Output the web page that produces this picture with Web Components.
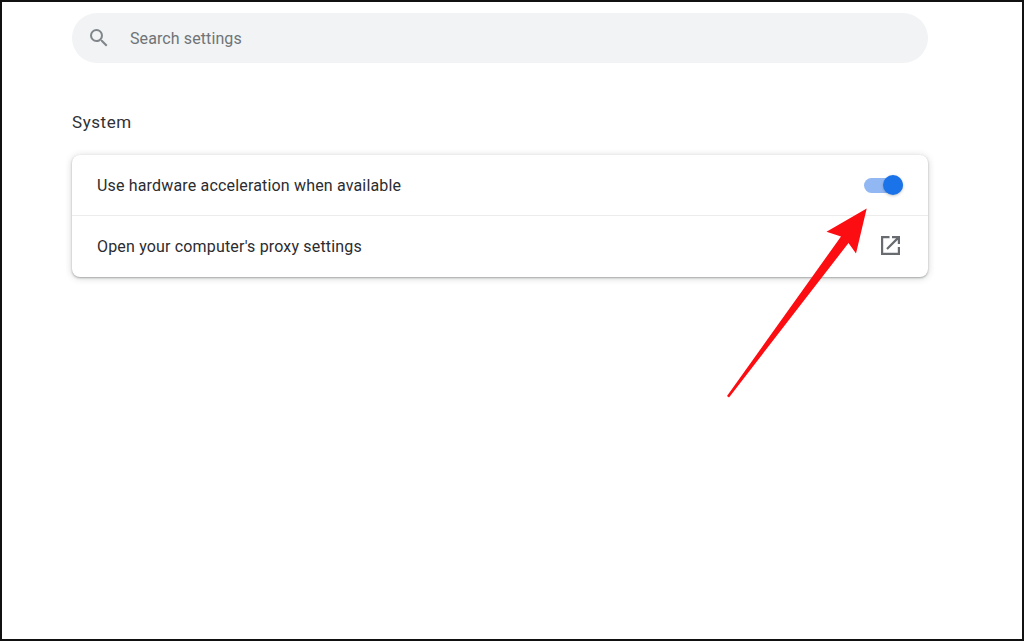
<!DOCTYPE html>
<html>
<head>
<meta charset="utf-8">
<title>Settings - System</title>
<style>
    html, body { margin: 0; height: 100%; background: #fff; }
    body { font-family: Roboto, "Liberation Sans", sans-serif; }
</style>
</head>
<body>
<settings-page>
    <settings-search slot="search" placeholder="Search settings"></settings-search>
    <settings-section title="System">
        <settings-row label="Use hardware acceleration when available">
            <settings-toggle checked></settings-toggle>
        </settings-row>
        <settings-row label="Open your computer's proxy settings" divider>
            <external-icon></external-icon>
        </settings-row>
    </settings-section>
    <callout-arrow slot="overlay"></callout-arrow>
</settings-page>

<script>
// Outer frame with the black screenshot border
class SettingsPage extends HTMLElement {
    constructor() {
        super();
        this.attachShadow({ mode: 'open' });
        this.shadowRoot.innerHTML = `
            <style>
                :host {
                    display: block;
                    position: relative;
                    width: 1024px;
                    height: 641px;
                    box-sizing: border-box;
                    border: 2px solid #111;
                    background: #fff;
                    overflow: hidden;
                }
                .main {
                    display: flex;
                    flex-direction: column;
                    padding: 11px 94px 0 70px;
                }
            </style>
            <div class="main">
                <slot name="search"></slot>
                <slot></slot>
            </div>
            <slot name="overlay"></slot>
        `;
    }
}

// Rounded grey search field
class SettingsSearch extends HTMLElement {
    constructor() {
        super();
        this.attachShadow({ mode: 'open' });
        const text = this.getAttribute('placeholder');
        this.shadowRoot.innerHTML = `
            <style>
                :host {
                    display: flex;
                    align-items: center;
                    height: 50px;
                    border-radius: 25px;
                    background: #f1f3f4;
                    color: #6f7377;
                    font-size: 16px;
                    letter-spacing: 0.1px;
                }
                svg { margin-left: 15px; width: 24px; height: 24px; fill: #80868b; }
                span { margin-left: 19px; }
            </style>
            <svg viewBox="0 0 24 24"><path d="M15.5 14h-.79l-.28-.27A6.47 6.47 0 0 0 16 9.5 6.5 6.5 0 1 0 9.5 16c1.61 0 3.09-.59 4.23-1.57l.27.28v.79l5 4.99L20.49 19l-4.99-5zm-6 0C7.01 14 5 11.99 5 9.5S7.01 5 9.5 5 14 7.01 14 9.5 11.99 14 9.5 14z"/></svg>
            <span>${text}</span>
        `;
    }
}

// Heading plus the raised card holding the rows
class SettingsSection extends HTMLElement {
    constructor() {
        super();
        this.attachShadow({ mode: 'open' });
        const title = this.getAttribute('title');
        this.removeAttribute('title');
        this.shadowRoot.innerHTML = `
            <style>
                :host { display: block; }
                h2 {
                    margin: 48px 0 22px;
                    font-size: 17px;
                    font-weight: 400;
                    line-height: 22px;
                    letter-spacing: 0.55px;
                    color: #303134;
                }
                .card {
                    background: #fff;
                    border-radius: 8px;
                    box-shadow: 0 1px 2px rgba(60,64,67,.38), 0 1px 6px 1px rgba(60,64,67,.18);
                }
            </style>
            <h2>${title}</h2>
            <div class="card"><slot></slot></div>
        `;
    }
}

// A single line in the card, control goes in the slot
class SettingsRow extends HTMLElement {
    constructor() {
        super();
        this.attachShadow({ mode: 'open' });
        const label = this.getAttribute('label');
        this.shadowRoot.innerHTML = `
            <style>
                :host {
                    display: flex;
                    align-items: center;
                    justify-content: space-between;
                    box-sizing: border-box;
                    height: 60px;
                    padding: 0 24px 0 25px;
                    font-size: 16px;
                    letter-spacing: 0.17px;
                    color: #2b2c2f;
                }
                :host([divider]) { height: 62px; border-top: 1px solid #ececec; }
            </style>
            <span>${label}</span>
            <slot></slot>
        `;
    }
}

class SettingsToggle extends HTMLElement {
    constructor() {
        super();
        this.attachShadow({ mode: 'open' });
        this.shadowRoot.innerHTML = `
            <style>
                :host {
                    display: block;
                    position: relative;
                    width: 39px;
                    height: 15px;
                    margin-right: 1px;
                    border-radius: 8px;
                    background: #92b8f4;
                }
                i {
                    position: absolute;
                    right: 0;
                    top: -3px;
                    width: 20px;
                    height: 20px;
                    border-radius: 50%;
                    background: #1a73e8;
                    box-shadow: 0 1px 3px rgba(60,64,67,.3);
                }
            </style>
            <i></i>
        `;
    }
}

class ExternalIcon extends HTMLElement {
    constructor() {
        super();
        this.attachShadow({ mode: 'open' });
        this.shadowRoot.innerHTML = `
            <style>
                :host { display: block; width: 19px; height: 19px; margin: 0 4px 2px 0; }
                svg { display: block; width: 19px; height: 19px; fill: none; stroke: #686b6f; stroke-width: 2.2; }
            </style>
            <svg viewBox="0 0 19 19"><path d="M8.5 1.1H1.1V17.9H17.9V11M11 1.1H17.9V8M17.6 1.4 6 13"/></svg>
        `;
    }
}

// Red annotation arrow lying over the card
class CalloutArrow extends HTMLElement {
    constructor() {
        super();
        this.attachShadow({ mode: 'open' });
        this.shadowRoot.innerHTML = `
            <style>
                :host { position: absolute; left: -2px; top: -2px; width: 1024px; height: 641px; pointer-events: none; }
                svg { display: block; }
            </style>
            <svg width="1024" height="641" viewBox="0 0 1024 641">
                <path fill="#fb0d12" d="M866.7 208.5 826.5 231.8 841 236.5 727 396 729 397.5 848.5 243 856 253.5z"/>
            </svg>
        `;
    }
}

customElements.define('settings-page', SettingsPage);
customElements.define('settings-search', SettingsSearch);
customElements.define('settings-section', SettingsSection);
customElements.define('settings-row', SettingsRow);
customElements.define('settings-toggle', SettingsToggle);
customElements.define('external-icon', ExternalIcon);
customElements.define('callout-arrow', CalloutArrow);
</script>
</body>
</html>
